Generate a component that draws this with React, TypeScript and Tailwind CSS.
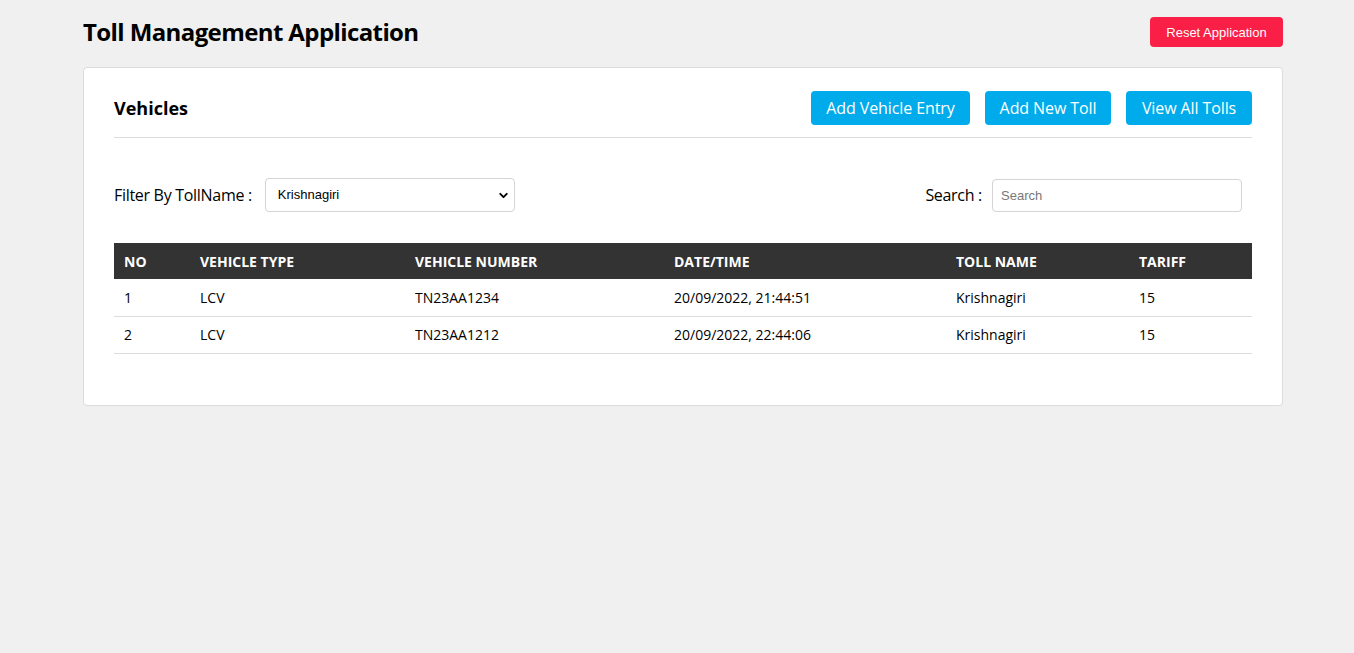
import { ChevronDown } from "lucide-react";

const rows = [
  { no: 1, type: "LCV", number: "TN23AA1234", date: "20/09/2022, 21:44:51", toll: "Krishnagiri", tariff: 15 },
  { no: 2, type: "LCV", number: "TN23AA1212", date: "20/09/2022, 22:44:06", toll: "Krishnagiri", tariff: 15 },
];

export default function App() {
  return (
    <main className="min-h-screen bg-[#f0f0f0] font-['Open_Sans',sans-serif] text-black">
      <div className="ml-[83px] w-[1200px] pt-[17px]">
        <header className="flex h-[30px] items-center justify-between">
          <h1 className="text-[24px] font-bold tracking-[-0.6px]">Toll Management Application</h1>
          <button className="h-[30px] w-[133px] rounded-[4px] bg-[#f91f46] pt-[2px] font-['Liberation_Sans',sans-serif] text-[13px] text-white">
            Reset Application
          </button>
        </header>

        <section className="mt-[20px] rounded-[4px] border border-[#dcdcdc] bg-white px-[30px] pb-[51px] pt-[23px]">
          <div className="flex items-center justify-between border-b border-[#dddddd] pb-[12px]">
            <h2 className="text-[18px] font-bold">Vehicles</h2>
            <div className="flex gap-[15px]">
              <button className="h-[34px] w-[159px] rounded-[4px] bg-[#00abec] text-[16px] text-white tracking-[-0.1px]">Add Vehicle Entry</button>
              <button className="h-[34px] w-[126px] rounded-[4px] bg-[#00abec] text-[16px] text-white tracking-[-0.1px]">Add New Toll</button>
              <button className="h-[34px] w-[126px] rounded-[4px] bg-[#00abec] text-[16px] text-white tracking-[-0.1px]">View All Tolls</button>
            </div>
          </div>

          <div className="mt-[40px] flex items-center justify-between pr-[10px]">
            <div className="flex items-center gap-[13px]">
              <span className="text-[16px] tracking-[-0.3px]">Filter By TollName :</span>
              <div className="relative flex h-[34px] w-[250px] items-center rounded-[4px] border border-[#d4d4d4] bg-white pl-[12px] font-['Liberation_Sans',sans-serif] text-[13px]">
                Krishnagiri
                <ChevronDown className="absolute right-[4px] top-[10px] size-[13px]" strokeWidth={3.5} />
              </div>
            </div>
            <div className="flex items-center gap-[10px]">
              <span className="text-[16px] tracking-[-0.3px]">Search :</span>
              <input
                placeholder="Search"
                className="h-[33px] w-[250px] rounded-[4px] border border-[#d4d4d4] bg-white px-[8px] font-['Liberation_Sans',sans-serif] text-[13px] placeholder:text-[#777] outline-none"
              />
            </div>
          </div>

          <table className="mt-[31px] w-full border-collapse text-left text-[14px]">
            <thead>
              <tr className="h-[36px] bg-[#333333] text-white">
                <th className="w-[76px] px-[10px] font-bold">NO</th>
                <th className="w-[215px] px-[10px] font-bold">VEHICLE TYPE</th>
                <th className="w-[259px] px-[10px] font-bold">VEHICLE NUMBER</th>
                <th className="w-[282px] px-[10px] font-bold">DATE/TIME</th>
                <th className="w-[183px] px-[10px] font-bold">TOLL NAME</th>
                <th className="px-[10px] font-bold">TARIFF</th>
              </tr>
            </thead>
            <tbody>
              {rows.map((r) => (
                <tr key={r.no} className="h-[37px] border-b border-[#dddddd]">
                  <td className="px-[10px]">{r.no}</td>
                  <td className="px-[10px]">{r.type}</td>
                  <td className="px-[10px]">{r.number}</td>
                  <td className="px-[10px]">{r.date}</td>
                  <td className="px-[10px]">{r.toll}</td>
                  <td className="px-[10px]">{r.tariff}</td>
                </tr>
              ))}
            </tbody>
          </table>
        </section>
      </div>
    </main>
  );
}
